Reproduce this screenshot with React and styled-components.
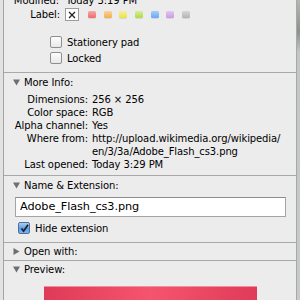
import React from "react";
import styled, { createGlobalStyle } from "styled-components";

const GlobalStyle = createGlobalStyle`
    html, body {
        margin: 0;
        padding: 0;
        height: 100%;
        overflow: hidden;
    }
    body {
        background: linear-gradient(180deg, #b4b8b2 0px, #8a928a 32px, #c2c6c6 52px, #c6caca 100%);
        font-family: "DejaVu Sans", "Liberation Sans", sans-serif;
        font-size: 10px;
        letter-spacing: -0.1px;
        color: #000;
    }
`;

const Page = styled.div`
    display: flex;
    height: 300px;
    width: 300px;
    overflow: hidden;
`;

const Gutter = styled.div`
    width: 3px;
    background: #e2e2e2;
`;

const Window = styled.div`
    width: 292px;
    background: #ececec;
    border-left: 1px solid #a3a3a3;
    border-right: 1px solid #a8a8a8;
    overflow: hidden;
`;

const Section = styled.div`
    border-top: ${(p) => (p.$first ? "none" : "1px solid #a9a9a9")};
    margin-top: ${(p) => (p.$first ? "-6px" : "0")};
    padding-bottom: ${(p) => p.$pb || 0}px;
`;

const Header = styled.div`
    display: flex;
    align-items: center;
    height: ${(p) => p.$h || 18}px;
    padding-left: 9px;
    gap: 4px;
`;

const InfoRow = styled.div`
    display: flex;
    line-height: 13px;
    margin-top: ${(p) => p.$mt || 0}px;
    align-items: ${(p) => (p.$center ? "center" : "flex-start")};
`;

const Key = styled.div`
    width: ${(p) => p.$w}px;
    flex: none;
    text-align: right;
`;

const Value = styled.div`
    padding-left: ${(p) => p.$gap || 4}px;
    white-space: pre-line;
`;

const LabelBox = styled.div`
    width: 12px;
    height: 11px;
    margin-left: 5px;
    background: #fff;
    border: 1px solid #9c9c9c;
    display: flex;
    align-items: center;
    justify-content: center;
`;

const Swatches = styled.div`
    display: flex;
    gap: 7.7px;
    margin-left: 9px;
`;

const Swatch = styled.div`
    width: 8px;
    height: 7px;
    border-radius: 1.5px;
    background: linear-gradient(180deg, ${(p) => p.$light}, ${(p) => p.$color});
    box-shadow: 0 0.5px 0.5px rgba(0, 0, 0, 0.18);
`;

const CheckRow = styled.label`
    display: flex;
    align-items: center;
    height: 12px;
    margin-left: ${(p) => p.$ml}px;
    margin-top: ${(p) => p.$mt || 0}px;
    gap: 5px;
`;

const Box = styled.span`
    width: 10px;
    height: 10px;
    border-radius: 2px;
    border: 1px solid ${(p) => (p.$checked ? "#50709a" : "#8e8e8e")};
    background: ${(p) =>
        p.$checked
            ? "linear-gradient(180deg, #a9d0f5, #5c9ce6 55%, #7ab4f0)"
            : "linear-gradient(180deg, #fdfdfd, #e8e8e8)"};
    display: flex;
    align-items: center;
    justify-content: center;
    flex: none;
`;

const NameField = styled.div`
    margin: 3px 10px 0 11px;
    height: 18px;
    background: #fff;
    border: 1px solid #a4a4a4;
    border-top-color: #8c8c8c;
    font-size: 11.3px;
    letter-spacing: -0.1px;
    line-height: 18px;
    padding-left: 4px;
`;

const Preview = styled.div`
    margin: 8px 0 0 40px;
    width: 213px;
    height: 60px;
    border-top: 1px solid #ef8fa2;
    background: linear-gradient(90deg, #df3a57, #f5546f 50%, #e03b58);
`;

function Triangle({ open }) {
    return (
        <svg width="7" height="7" viewBox="0 0 7 7">
            {open ? (
                <polygon points="0,0.5 7,0.5 3.5,6.5" fill="#6f6f6f" />
            ) : (
                <polygon points="0.5,0 6.5,3.5 0.5,7" fill="#6f6f6f" />
            )}
        </svg>
    );
}

function Check({ checked, label, ml, mt }) {
    return (
        <CheckRow $ml={ml} $mt={mt}>
            <Box $checked={checked}>
                {checked && (
                    <svg width="9" height="9" viewBox="0 0 9 9">
                        <path d="M1.5 4.5 L3.6 7.2 L8 0.8" stroke="#1b1b1b" strokeWidth="1.6" fill="none" />
                    </svg>
                )}
            </Box>
            <span>{label}</span>
        </CheckRow>
    );
}

const swatches = [
    ["#ee6b6b", "#f8a8a8"],
    ["#f2ad4e", "#f9d39a"],
    ["#ece04a", "#f7f09a"],
    ["#b2d84c", "#d6ee98"],
    ["#6aa8f6", "#a8cdfb"],
    ["#cc9ae6", "#e4c6f3"],
    ["#b4b4b4", "#d6d6d6"],
];

const moreInfo = [
    ["Dimensions:", "256 × 256"],
    ["Color space:", "RGB"],
    ["Alpha channel:", "Yes"],
    ["Where from:", "http://upload.wikimedia.org/wikipedia/\nen/3/3a/Adobe_Flash_cs3.png"],
    ["Last opened:", "Today 3:29 PM"],
];

export default function App() {
    return (
        <Page>
            <GlobalStyle />
            <Gutter />
            <Window>
                <Section $first $pb={8}>
                    <InfoRow>
                        <Key $w={55}>Modified:</Key>
                        <Value $gap={7}>Today 3:19 PM</Value>
                    </InfoRow>
                    <InfoRow $mt={1} $center>
                        <Key $w={56}>Label:</Key>
                        <LabelBox>
                            <svg width="8" height="8" viewBox="0 0 8 8">
                                <path d="M1 1 L7 7 M7 1 L1 7" stroke="#222" strokeWidth="1.3" />
                            </svg>
                        </LabelBox>
                        <Swatches>
                            {swatches.map(([c, l]) => (
                                <Swatch key={c} $color={c} $light={l} />
                            ))}
                        </Swatches>
                    </InfoRow>
                    <Check label="Stationery pad" ml={46} mt={15} />
                    <Check label="Locked" ml={46} mt={4} />
                </Section>
                <Section $pb={4}>
                    <Header>
                        <Triangle open />
                        <span>More Info:</span>
                    </Header>
                    <div style={{ height: 2 }} />
                    {moreInfo.map(([k, v]) => (
                        <InfoRow key={k}>
                            <Key $w={84}>{k}</Key>
                            <Value>{v}</Value>
                        </InfoRow>
                    ))}
                </Section>
                <Section $pb={8}>
                    <Header>
                        <Triangle open />
                        <span>Name &amp; Extension:</span>
                    </Header>
                    <NameField>Adobe_Flash_cs3.png</NameField>
                    <Check label="Hide extension" checked ml={14} mt={5} />
                </Section>
                <Section>
                    <Header $h={17}>
                        <Triangle />
                        <span>Open with:</span>
                    </Header>
                </Section>
                <Section>
                    <Header $h={17}>
                        <Triangle open />
                        <span>Preview:</span>
                    </Header>
                    <Preview />
                </Section>
            </Window>
        </Page>
    );
}
